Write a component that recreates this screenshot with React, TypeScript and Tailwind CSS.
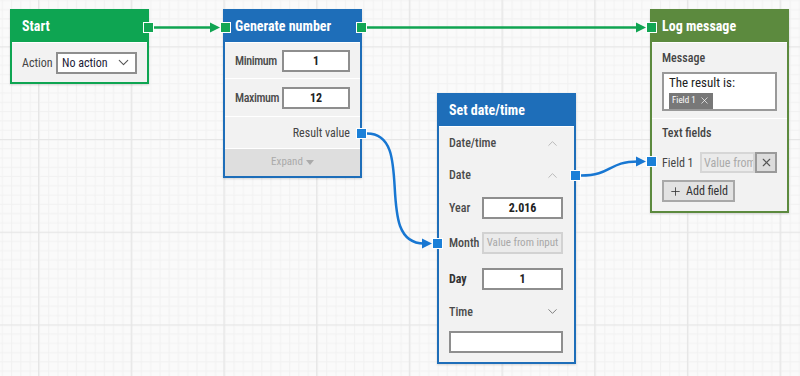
import { ChevronDown, ChevronUp, X, Plus } from 'lucide-react';
import type { ReactNode } from 'react';

const font = "font-['Liberation_Sans_Narrow','Roboto_Condensed','DejaVu_Sans_Condensed',Roboto,sans-serif]";

type Pt = { x: number; y: number; blue?: boolean };

const ports: Pt[] = [
  { x: 143, y: 22 },
  { x: 220, y: 22 },
  { x: 356, y: 22 },
  { x: 356, y: 128, blue: true },
  { x: 432, y: 238, blue: true },
  { x: 570, y: 170, blue: true },
  { x: 646, y: 22 },
  { x: 646, y: 156, blue: true },
];

function Port({ x, y, blue }: Pt) {
  return (
    <span
      className={`absolute w-[11px] h-[11px] border border-white ${blue ? 'bg-[#1b80d8]' : 'bg-[#13a654]'}`}
      style={{ left: x, top: y }}
    />
  );
}

function NodeBox({
  title,
  x,
  y,
  w,
  tone,
  children,
}: {
  title: string;
  x: number;
  y: number;
  w: number;
  tone: 'green' | 'blue' | 'olive';
  children: ReactNode;
}) {
  const border =
    tone === 'green' ? 'border-[#0ea552]' : tone === 'blue' ? 'border-[#1e6eb9]' : 'border-[#5c8a3e]';
  const head = tone === 'green' ? 'bg-[#0ea552]' : tone === 'blue' ? 'bg-[#1e6eb9]' : 'bg-[#5c8a3e]';
  return (
    <div className={`absolute border-2 ${border} shadow-[0_1px_2px_rgba(0,0,0,0.15)]`} style={{ left: x, top: y, width: w }}>
      <div className={`h-[31px] flex items-center px-[10px] text-white text-[14px] font-bold ${head}`}>{title}</div>
      <div className="bg-[#f2f2f2] border-t border-white">{children}</div>
    </div>
  );
}

function Box({ value, w }: { value: string; w: number }) {
  return (
    <div
      className="h-[22px] border-2 border-[#8e8e8e] bg-white flex items-center justify-center text-[12px] font-bold text-[#222]"
      style={{ width: w }}
    >
      {value}
    </div>
  );
}

function Arrow({ x, y, color }: { x: number; y: number; color: string }) {
  return <polygon points={`${x},${y} ${x - 10},${y - 5} ${x - 10},${y + 5}`} fill={color} />;
}

export default function App() {
  const green = '#10a452';
  const blue = '#1877d2';
  return (
    <div className={`relative w-[800px] h-[376px] overflow-hidden bg-[#fafafa] ${font}`}>
      <svg className="absolute inset-0" width="800" height="376">
        <defs>
          <pattern id="minor" width="9.27" height="9.27" patternUnits="userSpaceOnUse" x="38" y="46.3">
            <rect x="0" y="0" width="9.27" height="1" fill="#f1f1f1" />
            <rect x="0" y="0" width="1" height="9.27" fill="#f1f1f1" />
          </pattern>
          <pattern id="major" width="92.7" height="92.7" patternUnits="userSpaceOnUse" x="38" y="46.3">
            <rect x="0" y="0" width="92.7" height="92.7" fill="url(#minor)" />
            <rect x="0" y="0" width="92.7" height="1.2" fill="#e6e6e6" />
            <rect x="0" y="0" width="1.2" height="92.7" fill="#e6e6e6" />
          </pattern>
        </defs>
        <rect width="800" height="376" fill="url(#major)" />

        <line x1="154" y1="27.5" x2="212" y2="27.5" stroke={green} strokeWidth="2.5" />
        <Arrow x={220} y={27.5} color={green} />
        <line x1="367" y1="27.5" x2="638" y2="27.5" stroke={green} strokeWidth="2.5" />
        <Arrow x={646} y={27.5} color={green} />

        <path d="M367 133.5 C417 133.5 372 243.5 424 243.5" fill="none" stroke={blue} strokeWidth="2.5" />
        <Arrow x={432} y={243.5} color={blue} />
        <path d="M581 175.5 C612 175.5 608 161.5 638 161.5" fill="none" stroke={blue} strokeWidth="2.5" />
        <Arrow x={646} y={161.5} color={blue} />
      </svg>

      <NodeBox title="Start" x={10} y={9} w={139} tone="green">
        <div className="h-[39px] flex items-center justify-between px-[10px]">
          <span className="text-[12px] text-[#444]">Action</span>
          <div className="w-[81px] h-[22px] border-2 border-[#8e8e8e] bg-white flex items-center justify-between pl-[4px] pr-[3px]">
            <span className="text-[12px] text-[#1c1c38]">No action</span>
            <ChevronDown size={17} strokeWidth={1.5} className="text-[#555]" />
          </div>
        </div>
      </NodeBox>

      <NodeBox title="Generate number" x={223} y={9} w={139} tone="blue">
        <div className="divide-y divide-white">
          <div className="h-[36px] flex items-center justify-between px-[10px]">
            <span className="text-[12px] font-medium tracking-[-0.4px] text-[#4a4a4a]">Minimum</span>
            <Box value="1" w={68} />
          </div>
          <div className="h-[38px] flex items-center justify-between px-[10px]">
            <span className="text-[12px] font-medium tracking-[-0.4px] text-[#4a4a4a]">Maximum</span>
            <Box value="12" w={68} />
          </div>
          <div className="h-[32px] flex items-center justify-end px-[10px]">
            <span className="text-[12px] text-[#444]">Result value</span>
          </div>
          <div className="h-[27px] flex items-center justify-center gap-[3px] bg-[#dedede] text-[11px] text-[#aaa]">
            Expand
            <svg width="8" height="5" viewBox="0 0 8 5">
              <polygon points="0,0 8,0 4,5" fill="#aaa" />
            </svg>
          </div>
        </div>
      </NodeBox>

      <NodeBox title="Set date/time" x={437} y={93} w={139} tone="blue">
        <div className="pl-[10px] pr-[11px] text-[12px] text-[#4a4a4a]">
          <div className="h-[32px] flex items-center justify-between">
            <span className="font-medium">Date/time</span>
            <ChevronUp size={15} strokeWidth={1.5} className="text-[#b5b5b5] mr-[3px]" />
          </div>
          <div className="h-[32px] flex items-center justify-between">
            <span className="font-medium">Date</span>
            <ChevronUp size={15} strokeWidth={1.5} className="text-[#b5b5b5] mr-[3px]" />
          </div>
          <div className="h-[34px] flex items-center justify-between">
            <span className="font-medium">Year</span>
            <Box value="2.016" w={81} />
          </div>
          <div className="h-[36px] flex items-center justify-between">
            <span className="font-medium">Month</span>
            <div className="w-[81px] h-[22px] border-2 border-[#d2d2d2] bg-[#ebebeb] flex items-center justify-center whitespace-nowrap overflow-hidden text-[11px] text-[#a8a8a8]">
              Value from input
            </div>
          </div>
          <div className="h-[35px] flex items-center justify-between">
            <span className="font-bold text-[#333]">Day</span>
            <Box value="1" w={81} />
          </div>
          <div className="h-[31px] flex items-center justify-between">
            <span className="font-medium">Time</span>
            <ChevronDown size={15} strokeWidth={1.5} className="text-[#777] mr-[3px]" />
          </div>
          <div className="pt-[4px] pb-[9px]">
            <div className="h-[22px] border-2 border-[#8e8e8e] bg-white" />
          </div>
        </div>
      </NodeBox>

      <NodeBox title="Log message" x={650} y={9} w={139} tone="olive">
        <div className="divide-y divide-white text-[12px] text-[#444]">
          <div className="px-[10px] pt-[7px] pb-[7px]">
            <div className="h-[16px] flex items-center font-medium">Message</div>
            <div className="mt-[6px] h-[39px] border-2 border-[#999] bg-white pl-[5px] pt-[1px]">
              <div className="text-[13px] leading-[15px] text-[#222]">The result is:</div>
              <div className="mt-[2px] inline-flex items-center gap-[3px] h-[16px] px-[3px] bg-[#787878] text-white text-[9px]">
                Field 1
                <X size={11} strokeWidth={1.5} />
              </div>
            </div>
          </div>
          <div className="px-[10px] pt-[6px] pb-[9px]">
            <div className="h-[16px] flex items-center font-medium">Text fields</div>
            <div className="mt-[11px] h-[21px] flex items-center justify-between">
              <span>Field 1</span>
              <div className="flex">
                <div className="w-[55px] h-[21px] border-2 border-[#d6d6d6] bg-[#ebebeb] flex items-center pl-[2px] overflow-hidden whitespace-nowrap text-[#aaa]">
                  Value from
                </div>
                <div className="w-[22px] h-[21px] border-2 border-[#9a9a9a] bg-[#dcdcdc] flex items-center justify-center">
                  <X size={13} strokeWidth={2} className="text-[#555]" />
                </div>
              </div>
            </div>
            <div className="mt-[7px] w-[73px] h-[22px] border-2 border-[#a8a8a8] bg-[#e2e2e2] flex items-center justify-center gap-[4px] text-[#333]">
              <Plus size={13} strokeWidth={1.5} />
              Add field
            </div>
          </div>
        </div>
      </NodeBox>

      {ports.map((p, i) => (
        <Port key={i} {...p} />
      ))}
    </div>
  );
}
